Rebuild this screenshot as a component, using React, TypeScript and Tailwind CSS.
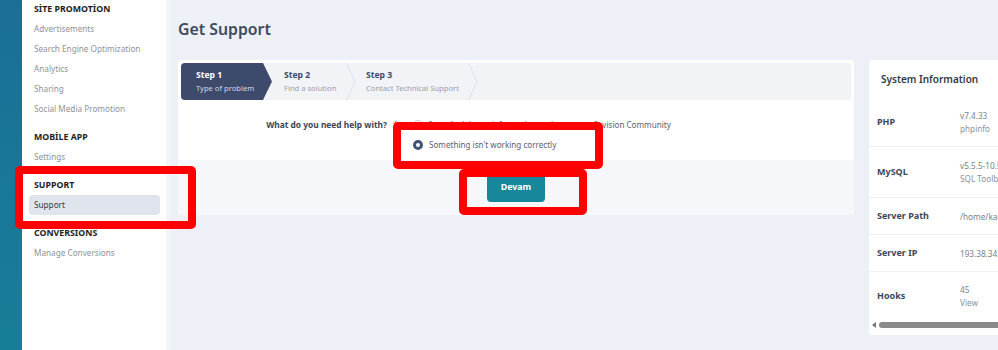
import React from "react";

const F = { fontFamily: '"Noto Sans", "Open Sans", sans-serif' };

function SideGroup({ title, items, selected }: { title: string; items: string[]; selected?: string }) {
  return (
    <div className="mb-[10px]">
      <div className="h-[18px] flex items-center px-[5px] text-[8.8px] font-bold text-[#1e1e1e] uppercase">{title}</div>
      {items.map((it) => (
        <div
          key={it}
          className={
            "h-5 flex items-center px-[5px] text-[8.2px] rounded " +
            (it === selected ? "bg-[#e0e4ed] text-[#333a46]" : "text-[#8d929b]")
          }
        >
          {it}
        </div>
      ))}
    </div>
  );
}

function Chevron() {
  return (
    <svg width="10" height="37" viewBox="0 0 10 37" className="shrink-0">
      <path d="M0.5 0 L9 18.5 L0.5 37" fill="none" stroke="#dde1e8" strokeWidth="1" />
    </svg>
  );
}

function InfoRow({ label, v1, v2, h }: { label: string; v1: string; v2?: string; h: string }) {
  return (
    <div className={"flex items-center border-b border-[#eef0f3] " + h}>
      <div className="w-[91px] shrink-0 pl-2 text-[9px] font-bold text-[#3c4658] whitespace-nowrap">{label}</div>
      <div className="flex flex-col leading-[13px]">
        <span className="text-[8.2px] text-[#7a7f88] whitespace-nowrap">{v1}</span>
        {v2 && <span className="text-[8.2px] text-[#8d929b] whitespace-nowrap">{v2}</span>}
      </div>
    </div>
  );
}

export default function App() {
  return (
    <div style={F} className="relative flex h-[350px] w-[998px] overflow-hidden bg-[#edf0f6]">
      <div className="w-[22px] shrink-0 bg-gradient-to-b from-[#1a6f98] to-[#187e97]" />
      <div className="w-[144px] shrink-0 bg-white pl-[7px] pr-[6px] pt-px">
        <SideGroup title="SİTE PROMOTİON" items={["Advertisements", "Search Engine Optimization", "Analytics", "Sharing", "Social Media Promotion"]} />
        <SideGroup title="MOBİLE APP" items={["Settings"]} />
        <SideGroup title="SUPPORT" items={["Support"]} selected="Support" />
        <SideGroup title="CONVERSİONS" items={["Manage Conversions"]} />
      </div>
      <div className="flex-1 border-l-4 border-[#f3f5f9] pl-2">
        <div className="pt-[19px] mb-[19px]">
          <div className="h-[22px] flex items-center text-[15.8px] font-semibold text-[#3f4a5d]">Get Support</div>
        </div>
        <div className="flex gap-[15px] items-start">
          <div className="w-[676px] shrink-0 bg-white rounded">
            <div className="p-[3px]">
              <div className="flex h-[37px] bg-[#f1f3f7] rounded">
                <div className="w-[91px] shrink-0 bg-[#3d4a6b] rounded-l [clip-path:polygon(0_0,calc(100%-9px)_0,100%_50%,calc(100%-9px)_100%,0_100%)] pl-[15px] flex flex-col justify-center leading-[13px]">
                  <span className="text-[8.6px] font-bold text-white">Step 1</span>
                  <span className="text-[7.6px] text-[#d3d8e3] whitespace-nowrap">Type of problem</span>
                </div>
                <div className="w-[74px] shrink-0 pl-3 flex flex-col justify-center leading-[13px]">
                  <span className="text-[8.6px] font-bold text-[#3d4a6b]">Step 2</span>
                  <span className="text-[7.6px] text-[#9aa0aa] whitespace-nowrap">Find a solution</span>
                </div>
                <Chevron />
                <div className="w-[112px] shrink-0 pl-[10px] flex flex-col justify-center leading-[13px]">
                  <span className="text-[8.6px] font-bold text-[#3d4a6b]">Step 3</span>
                  <span className="text-[7.6px] text-[#9aa0aa] whitespace-nowrap">Contact Technical Support</span>
                </div>
                <Chevron />
              </div>
            </div>
            <div className="flex pt-[12px] pb-[5px]">
              <div className="w-[209px] shrink-0 h-5 flex items-center justify-end text-[8.4px] font-bold text-[#3b4456] whitespace-nowrap">
                What do you need help with?
              </div>
              <div className="w-[26px] shrink-0 pl-[6px] h-5 flex items-center text-[10px] text-[#e0332f]">*</div>
              <div className="flex flex-col">
                <div className="h-5 flex items-center gap-[6px]">
                  <span className="w-[10px] h-[10px] rounded-full border border-[#c5cad3] bg-white" />
                  <span className="text-[8.1px] text-[#5a6270] whitespace-nowrap">I need advice or information on how to use Invision Community</span>
                </div>
                <div className="h-5 flex items-center gap-[6px]">
                  <span className="w-[10px] h-[10px] rounded-full border-[3px] border-[#3e5576] bg-white" />
                  <span className="text-[8.1px] text-[#5a6270] whitespace-nowrap">Something isn't working correctly</span>
                </div>
              </div>
            </div>
            <div className="h-[55px] bg-[#f5f7fa] rounded-b flex items-center justify-center">
              <button className="h-[28px] w-[58px] rounded bg-[#17879c] text-white text-[8.8px] font-bold">Devam</button>
            </div>
          </div>
          <div className="w-[160px] shrink-0 bg-white rounded h-[275px] flex flex-col">
            <div className="h-[38px] flex items-center pl-3 text-[10px] font-semibold text-[#333942]">System Information</div>
            <InfoRow label="PHP" v1="v7.4.33" v2="phpinfo" h="h-[49px]" />
            <InfoRow label="MySQL" v1="v5.5.5-10.5.19" v2="SQL Toolbox" h="h-[51px]" />
            <InfoRow label="Server Path" v1="/home/kamu/public_html" h="h-[37px]" />
            <InfoRow label="Server IP" v1="193.38.34.128" h="h-[37px]" />
            <div className="flex items-center h-[48px]">
              <div className="w-[91px] shrink-0 pl-2 text-[9px] font-bold text-[#3c4658]">Hooks</div>
              <div className="flex flex-col leading-[13px]">
                <span className="text-[8.2px] text-[#7a7f88]">45</span>
                <span className="text-[8.2px] text-[#8d929b]">View</span>
              </div>
            </div>
            <div className="flex items-center gap-[3px] pl-[3px] h-[10px]">
              <svg width="4" height="6" viewBox="0 0 4 6"><path d="M4 0 L0 3 L4 6 Z" fill="#777" /></svg>
              <div className="flex-1 h-[6px] rounded-full bg-[#8a8a8a]" />
            </div>
          </div>
        </div>
      </div>

      {/* annotation overlays */}
      <div className="absolute left-[15px] top-[166px] w-[181px] h-[63px] border-[8px] border-[#ff0000] rounded-[5px]" />
      <div className="absolute left-[393px] top-[122px] w-[210px] h-[47px] border-[8px] border-[#ff0000] rounded-[5px]" />
      <div className="absolute left-[459px] top-[169px] w-[128px] h-[46px] border-[8px] border-[#ff0000] rounded-[5px]" />
    </div>
  );
}
